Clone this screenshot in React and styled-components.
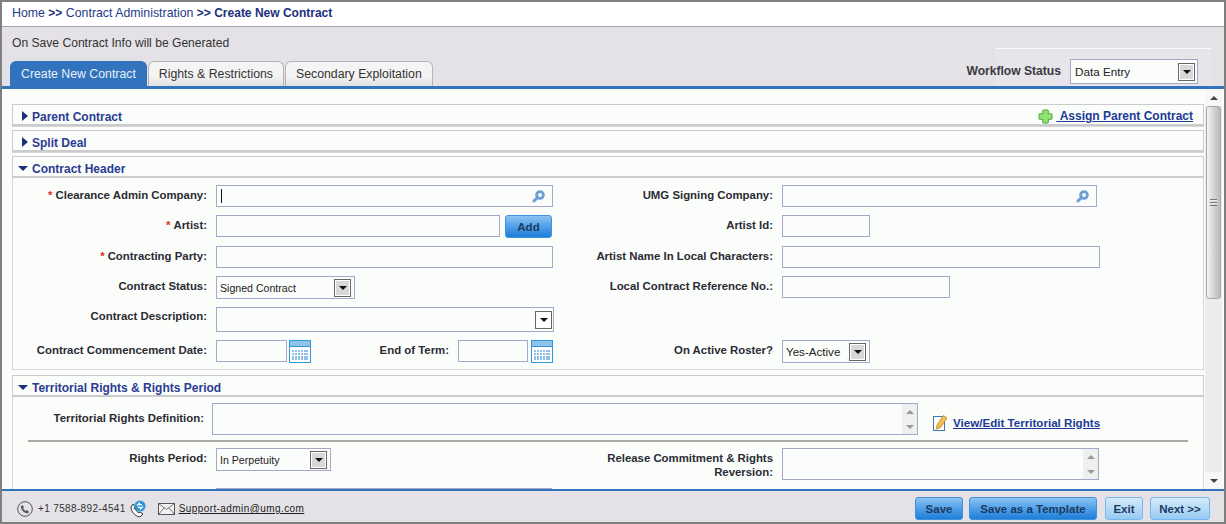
import React from "react";
import styled, { createGlobalStyle } from "styled-components";

const Global = createGlobalStyle`
  html, body { margin: 0; padding: 0; background: #fff; }
  * { box-sizing: border-box; }
`;

const Frame = styled.div`
  width: 1226px;
  height: 524px;
  border: 2px solid #7f7f7f;
  display: flex;
  flex-direction: column;
  overflow: hidden;
  font-family: "Liberation Sans", Arial, sans-serif;
  font-size: 12px;
  color: #222;
  background: #e4e2e6;
`;

const Crumbs = styled.div`
  height: 25px;
  flex: none;
  background: #fff;
  border-bottom: 1px solid #a5a5a5;
  padding: 3px 0 0 10px;
  font-size: 12.35px;
  line-height: 16px;
  color: #1f3a8a;
  b { color: #1c2f7c; font-size: 12px; }
`;

const InfoBar = styled.div`
  height: 59px;
  flex: none;
  position: relative;
  padding: 9px 0 0 10px;
  font-size: 12.1px;
  line-height: 15px;
  color: #333;
`;

const Tabs = styled.div`
  position: absolute;
  left: 8px;
  bottom: 0;
  display: flex;
  gap: 1px;
`;

const Tab = styled.div`
  height: 25px;
  padding: 0 ${(p) => p.$px ?? 10}px;
  display: flex;
  align-items: center;
  border-radius: 6px 6px 0 0;
  border: 1px solid ${(p) => (p.$active ? "#3273bd" : "#b4b4b4")};
  border-bottom: 0;
  background: ${(p) => (p.$active ? "#3273bd" : "linear-gradient(#f4f4f4 60%, #e0e0e0)")};
  color: ${(p) => (p.$active ? "#e8f0fa" : "#333")};
  font-size: 12.3px;
`;

const Workflow = styled.div`
  position: absolute;
  right: 13px;
  top: 21px;
  width: 216px;
  height: 38px;
  border-top: 1px solid #fafafa;
  background: #e7e5e9;
  display: flex;
  align-items: flex-start;
  justify-content: flex-end;
  gap: 9px;
  padding: 10px 13px 0 0;
  b { line-height: 24px; color: #3a3a44; white-space: nowrap; }
`;

const Main = styled.div`
  flex: 1;
  min-height: 0;
  border-top: 3px solid #3273bd;
  border-bottom: 2px solid #3273bd;
  background: #fbfdfb;
  display: flex;
`;

const Pane = styled.div`
  flex: 1;
  min-width: 0;
  overflow: hidden;
  padding: 15px 0 0 10px;
`;

const Scrollbar = styled.div`
  width: 17px;
  flex: none;
  margin-right: 2px;
  background: #ececec;
  display: flex;
  flex-direction: column;
  align-items: stretch;
`;

const ScrollArrow = styled.div`
  height: 17px;
  flex: none;
  background: #f6f7f6;
  display: flex;
  align-items: center;
  justify-content: center;
  &::after {
    content: "";
    border-left: 4px solid transparent;
    border-right: 4px solid transparent;
    ${(p) => (p.$down ? "border-top: 4px solid #444;" : "border-bottom: 4px solid #444;")}
  }
`;

const ScrollThumb = styled.div`
  position: relative;
  height: 193px;
  margin: 0 1px;
  border: 1px solid #a9a9a9;
  border-radius: 3px;
  background: linear-gradient(90deg, #f4f4f4, #cfcfcf 60%, #bbb);
  flex: none;
  &::after {
    content: "";
    position: absolute;
    left: 3px;
    right: 3px;
    top: 92px;
    height: 7px;
    background: repeating-linear-gradient(#777 0 1px, #eee 1px 2px, transparent 2px 3px);
  }
`;

const ScrollTrack = styled.div`
  flex: 1;
`;

const Panel = styled.section`
  width: 1192px;
  margin-bottom: ${(p) => p.$gap ?? 3}px;
  border: 1px solid #d6d6d6;
  border-top: 0;
`;

const PanelHead = styled.div`
  height: 22px;
  margin: 0 -1px;
  border: 1px solid #cbcbcb;
  border-bottom-width: 2px;
  display: flex;
  align-items: center;
  justify-content: space-between;
  padding: 4px 10px 0 9px;
  font-size: 12px;
  font-weight: bold;
  color: #2a3c92;
`;

const HeadTitle = styled.span`
  display: flex;
  align-items: center;
  gap: 4px;
  margin-left: ${(p) => (p.$open ? -4 : 0)}px;
`;

const ArrowRight = styled.i`
  width: 0;
  height: 0;
  margin-top: -2px;
  border-top: 5px solid transparent;
  border-bottom: 5px solid transparent;
  border-left: 6px solid #1c2f7c;
`;

const ArrowDown = styled.i`
  width: 0;
  height: 0;
  border-left: 5px solid transparent;
  border-right: 5px solid transparent;
  border-top: 5px solid #1c2f7c;
`;

const LinkText = styled.a`
  color: #1c3a96;
  text-decoration: underline;
  font-weight: bold;
  font-size: ${(p) => p.$fs ?? 12}px;
`;

const AssignLink = styled.span`
  display: flex;
  align-items: center;
  gap: 3px;
  margin-top: -1px;
`;

const FormBody = styled.div`
  padding: 7px 0 0;
`;

const Row = styled.div`
  display: grid;
  grid-template-columns: 194px 346px 202px 1fr;
  column-gap: 9px;
  height: ${(p) => p.$h}px;
  align-items: start;
`;

const Label = styled.label`
  text-align: right;
  font-size: 11.4px;
  font-weight: bold;
  line-height: ${(p) => p.$lh ?? 20}px;
  padding-top: ${(p) => p.$pt ?? 0}px;
  color: #2b2b33;
  em { color: #e02b20; font-style: normal; margin-right: 3px; }
`;

const Cell = styled.div`
  display: flex;
  align-items: flex-start;
`;

const TextBox = styled.div`
  position: relative;
  width: ${(p) => p.$w}px;
  height: ${(p) => p.$height ?? 22}px;
  flex: none;
  border: 1px solid #a7a7cb;
  background: #fbfdfb;
`;

const Caret = styled.span`
  position: absolute;
  left: 4px;
  top: 3px;
  width: 1px;
  height: 14px;
  background: #111;
`;

const Magnifier = styled.svg`
  position: absolute;
  right: 7px;
  top: 4px;
`;

const SelectBox = styled.div`
  width: ${(p) => p.$w}px;
  height: ${(p) => p.$height ?? 23}px;
  flex: none;
  border: 1px solid #a7a7cb;
  background: #fbfdfb;
  display: flex;
  align-items: center;
  justify-content: space-between;
  padding: 0 ${(p) => p.$pr ?? 3}px 0 ${(p) => p.$pl ?? 3}px;
  font-size: ${(p) => p.$fs ?? 10.6}px;
  color: #222;
`;

const SelectButton = styled.span`
  width: 17px;
  height: 18px;
  flex: none;
  border: 1px solid #666;
  box-shadow: inset 0 0 0 1px #fff;
  background: ${(p) => (p.$flat ? "#fff" : "#d8d8d8")};
  display: flex;
  align-items: center;
  justify-content: center;
  &::after {
    content: "";
    border-left: 4px solid transparent;
    border-right: 4px solid transparent;
    border-top: 4px solid #111;
  }
`;

const BlueButton = styled.button`
  height: 23px;
  width: ${(p) => p.$w}px;
  padding: 0;
  border: 1px solid ${(p) => (p.$light ? "#74b9ef" : "#3f93dd")};
  border-radius: 3px;
  background: ${(p) =>
    p.$light
      ? "linear-gradient(#d3e9f9, #b3d9f7 55%, #96caf3)"
      : "linear-gradient(#8cc4f2, #4fa0ea 50%, #1e7ed8)"};
  font: bold 11.5px "Liberation Sans", Arial, sans-serif;
  color: #1c3a60;
`;

const AddButton = styled(BlueButton)`
  margin-left: 5px;
`;

const TextArea = styled(TextBox)`
  display: flex;
  justify-content: flex-end;
`;

const AreaScroll = styled.div`
  width: 15px;
  background: #eef0ee;
  display: flex;
  flex-direction: column;
  justify-content: space-between;
  align-items: center;
  padding: 6px 0 5px;
`;

const AreaArrow = styled.i`
  border-left: 4px solid transparent;
  border-right: 4px solid transparent;
  ${(p) => (p.$down ? "border-top: 4px solid #999;" : "border-bottom: 4px solid #999;")}
`;

const DateLabel = styled(Label)`
  width: 138px;
  flex: none;
`;

const Spaced = styled.span`
  margin-left: ${(p) => p.$ml}px;
  display: inline-flex;
`;

const TerritoryRow = styled.div`
  display: flex;
  align-items: flex-start;
  gap: 8px;
  padding: 6px 0 0;
`;

const TerritoryLabel = styled(Label)`
  width: 191px;
  flex: none;
  line-height: 30px;
`;

const EditLink = styled.span`
  display: flex;
  align-items: center;
  gap: 5px;
  margin: 11px 0 0 7px;
`;

const Rule = styled.hr`
  margin: 5px 15px 6px;
  width: 1160px;
  height: 2px;
  border: 0;
  background: #a8a8a4;
`;

const Footer = styled.footer`
  height: 31px;
  flex: none;
  display: flex;
  align-items: flex-start;
  justify-content: space-between;
  padding: 6px 14px 0 15px;
`;

const Contact = styled.div`
  display: flex;
  align-items: center;
  height: 23px;
  font-size: 10px;
  letter-spacing: 0.35px;
  color: #333;
  a { color: #222; text-decoration: underline; letter-spacing: 0.42px; }
`;

const Actions = styled.div`
  display: flex;
  gap: 6px;
`;

const IconGap = styled.span`
  display: inline-flex;
  margin: ${(p) => p.$m};
`;

const Search = () => (
  <Magnifier width="13" height="13" viewBox="0 0 13 13">
    <circle cx="8" cy="5" r="3.4" fill="none" stroke="#6e9ed6" strokeWidth="2.8" />
    <path d="M5 8 L2 11" stroke="#6e9ed6" strokeWidth="3" strokeLinecap="round" />
  </Magnifier>
);

const Calendar = () => (
  <svg width="22" height="23" viewBox="0 0 22 23" style={{ flex: "none" }}>
    <rect x="0.5" y="0.5" width="21" height="22" fill="#fff" stroke="#2f97dc" />
    <rect x="1" y="1" width="20" height="5" fill="#8ec4ea" />
    <path d="M1 6.5 H21" stroke="#2f97dc" />
    <g fill="#8fc0e8">
      {[3, 6, 9, 12, 15, 17].map((x) =>
        [10, 13, 16, 18].map((y) => <rect key={x + "-" + y} x={x} y={y} width="2" height="2" />)
      )}
    </g>
  </svg>
);

const Plus = () => (
  <svg width="15" height="15" viewBox="0 0 16 16">
    <path
      d="M6 1 H10 Q11 1 11 2 V5 H14 Q15 5 15 6 V10 Q15 11 14 11 H11 V14 Q11 15 10 15 H6 Q5 15 5 14 V11 H2 Q1 11 1 10 V6 Q1 5 2 5 H5 V2 Q5 1 6 1 Z"
      fill="#93e26f"
      stroke="#43a33c"
    />
  </svg>
);

const Pencil = () => (
  <svg width="15" height="17" viewBox="0 0 15 17">
    <rect x="0.5" y="2.5" width="11" height="14" fill="#fff" stroke="#3d79b8" />
    <path d="M4 11 L10.5 1.5 L14 4 L7.5 13.5 L3.5 15 Z" fill="#f0c050" stroke="#b9822a" strokeWidth="0.8" />
  </svg>
);

const Phone = () => (
  <svg width="16" height="16" viewBox="0 0 16 16">
    <circle cx="8" cy="8" r="7.3" fill="#e4e2e6" stroke="#555" />
    <path d="M5 4 L7 6 L6 7.5 L8.5 10 L10 9 L12 11 L10.5 12.5 C7 12 4 9 3.8 5.5 Z" fill="#555" />
  </svg>
);

const CallIcon = () => (
  <svg width="16" height="18" viewBox="0 0 16 18">
    <path d="M1 7 C1 12 5 16 10 17 L13 14 L10 12 L8.5 13 L4 8 L5 6.5 L3 4 Z" fill="#fff" stroke="#333" />
    <circle cx="10" cy="6" r="5.6" fill="#2f97dc" />
    <path d="M7 5.5 L9.5 3.2 V4.6 H12 M13 6.5 L10.5 8.8 V7.4 H8" stroke="#fff" strokeWidth="1.2" fill="none" />
  </svg>
);

const Mail = () => (
  <svg width="17" height="12" viewBox="0 0 17 12">
    <rect x="0.5" y="0.5" width="16" height="11" fill="#f2f2f2" stroke="#555" />
    <path d="M0.5 0.5 L8.5 6.5 L16.5 0.5 M0.5 11.5 L6 5 M16.5 11.5 L11 5" fill="none" stroke="#555" strokeWidth="0.8" />
  </svg>
);

export default function App() {
  return (
    <Frame>
      <Global />
      <Crumbs>
        Home <b>&gt;&gt;</b> Contract Administration <b>&gt;&gt; Create New Contract</b>
      </Crumbs>
      <InfoBar>
        On Save Contract Info will be Generated
        <Tabs>
          <Tab $active>Create New Contract</Tab>
          <Tab>Rights &amp; Restrictions</Tab>
          <Tab>Secondary Exploitation</Tab>
        </Tabs>
        <Workflow>
          <b>Workflow Status</b>
          <SelectBox $w={128} $height={25} $fs={11.7} $pr={2} $pl={4}>
            Data Entry
            <SelectButton />
          </SelectBox>
        </Workflow>
      </InfoBar>
      <Main>
        <Pane>
          <Panel>
            <PanelHead>
              <HeadTitle>
                <ArrowRight />
                Parent Contract
              </HeadTitle>
              <AssignLink>
                <Plus />
                <LinkText>&nbsp;Assign Parent Contract</LinkText>
              </AssignLink>
            </PanelHead>
          </Panel>
          <Panel>
            <PanelHead>
              <HeadTitle>
                <ArrowRight />
                Split Deal
              </HeadTitle>
            </PanelHead>
          </Panel>
          <Panel $gap={5}>
            <PanelHead>
              <HeadTitle $open>
                <ArrowDown />
                Contract Header
              </HeadTitle>
            </PanelHead>
            <FormBody>
              <Row $h={30}>
                <Label><em>*</em>Clearance Admin Company:</Label>
                <Cell>
                  <TextBox $w={337}>
                    <Caret />
                    <Search />
                  </TextBox>
                </Cell>
                <Label>UMG Signing Company:</Label>
                <Cell>
                  <TextBox $w={315}>
                    <Search />
                  </TextBox>
                </Cell>
              </Row>
              <Row $h={31}>
                <Label><em>*</em>Artist:</Label>
                <Cell>
                  <TextBox $w={284} />
                  <AddButton $w={47}>Add</AddButton>
                </Cell>
                <Label>Artist Id:</Label>
                <Cell>
                  <TextBox $w={88} />
                </Cell>
              </Row>
              <Row $h={30}>
                <Label><em>*</em>Contracting Party:</Label>
                <Cell>
                  <TextBox $w={337} />
                </Cell>
                <Label>Artist Name In Local Characters:</Label>
                <Cell>
                  <TextBox $w={318} />
                </Cell>
              </Row>
              <Row $h={31}>
                <Label>Contract Status:</Label>
                <Cell>
                  <SelectBox $w={139}>
                    Signed Contract
                    <SelectButton />
                  </SelectBox>
                </Cell>
                <Label>Local Contract Reference No.:</Label>
                <Cell>
                  <TextBox $w={168} />
                </Cell>
              </Row>
              <Row $h={33}>
                <Label $lh={18}>Contract Description:</Label>
                <Cell>
                  <SelectBox $w={338} $height={25} $pr={1}>
                    &nbsp;
                    <SelectButton $flat />
                  </SelectBox>
                </Cell>
                <span />
                <span />
              </Row>
              <Row $h={29}>
                <Label>Contract Commencement Date:</Label>
                <Cell>
                  <TextBox $w={71} />
                  <Spaced $ml={2}><Calendar /></Spaced>
                  <DateLabel as="label">End of Term:</DateLabel>
                  <Spaced $ml={9}><TextBox $w={70} /></Spaced>
                  <Spaced $ml={3}><Calendar /></Spaced>
                </Cell>
                <Label>On Active Roster?</Label>
                <Cell>
                  <SelectBox $w={88} $fs={11.6}>
                    Yes-Active
                    <SelectButton />
                  </SelectBox>
                </Cell>
              </Row>
            </FormBody>
          </Panel>
          <Panel>
            <PanelHead>
              <HeadTitle $open>
                <ArrowDown />
                Territorial Rights &amp; Rights Period
              </HeadTitle>
            </PanelHead>
            <TerritoryRow>
              <TerritoryLabel>Territorial Rights Definition:</TerritoryLabel>
              <TextArea $w={706} $height={32}>
                <AreaScroll>
                  <AreaArrow />
                  <AreaArrow $down />
                </AreaScroll>
              </TextArea>
              <EditLink>
                <Pencil />
                <LinkText $fs={11.6}>View/Edit Territorial Rights</LinkText>
              </EditLink>
            </TerritoryRow>
            <Rule />
            <Row $h={40}>
              <Label>Rights Period:</Label>
              <Cell>
                <SelectBox $w={115}>
                  In Perpetuity
                  <SelectButton />
                </SelectBox>
              </Cell>
              <Label $lh={14} $pt={3}>Release Commitment &amp; Rights Reversion:</Label>
              <Cell>
                <TextArea $w={317} $height={32}>
                  <AreaScroll>
                    <AreaArrow />
                    <AreaArrow $down />
                  </AreaScroll>
                </TextArea>
              </Cell>
            </Row>
            <Row $h={22}>
              <span />
              <Cell>
                <TextBox $w={336} />
              </Cell>
            </Row>
          </Panel>
        </Pane>
        <Scrollbar>
          <ScrollArrow />
          <ScrollThumb />
          <ScrollTrack />
          <ScrollArrow $down />
        </Scrollbar>
      </Main>
      <Footer>
        <Contact>
          <Phone />
          <IconGap $m="0 4px 0 5px">+1 7588-892-4541</IconGap>
          <IconGap $m="0 12px 0 0"><CallIcon /></IconGap>
          <IconGap $m="0 4px 0 0"><Mail /></IconGap>
          <a>Support-admin@umg.com</a>
        </Contact>
        <Actions>
          <BlueButton $w={48}>Save</BlueButton>
          <BlueButton $w={128}>Save as a Template</BlueButton>
          <IconGap $m="0 0 0 2px"><BlueButton $w={38} $light>Exit</BlueButton></IconGap>
          <IconGap $m="0 0 0 1px"><BlueButton $w={60} $light>Next &gt;&gt;</BlueButton></IconGap>
        </Actions>
      </Footer>
    </Frame>
  );
}
